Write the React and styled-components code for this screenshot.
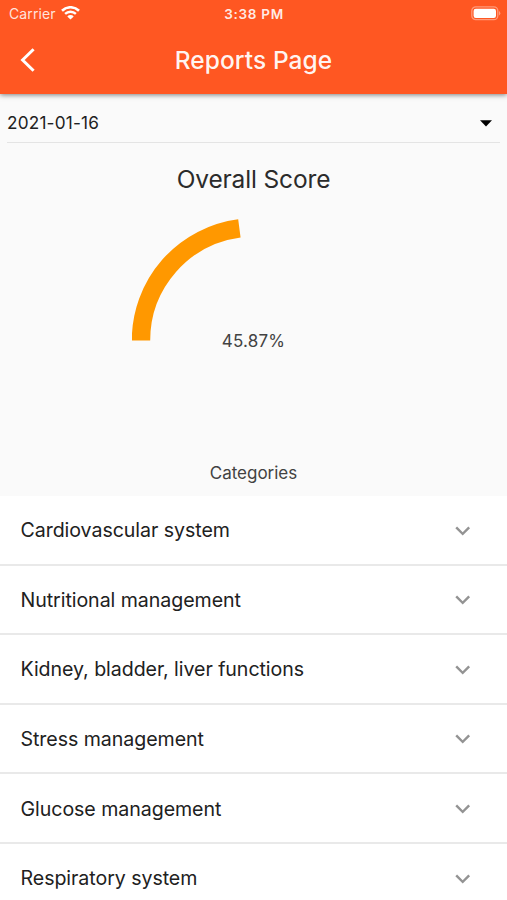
import React, { useState } from "react";
import styled, { createGlobalStyle } from "styled-components";

const categories = [
  "Cardiovascular system",
  "Nutritional management",
  "Kidney, bladder, liver functions",
  "Stress management",
  "Glucose management",
  "Respiratory system",
];

const RADIUS = 113;

// half circle gauge, starts on the left and runs clockwise
function arcPath(score) {
  const angle = (score / 100) * Math.PI;
  const x = 122 - RADIUS * Math.cos(angle);
  const y = 122.4 - RADIUS * Math.sin(angle);
  return `M ${122 - RADIUS} 122.4 A ${RADIUS} ${RADIUS} 0 0 1 ${x} ${y}`;
}

function StatusBar() {
  return (
    <StatusRow>
      <Carrier>
        <span>Carrier</span>
        <svg width="19" height="15" viewBox="0 0 19 15" fill="none">
          <path d="M1 4.7 A12.2 12.2 0 0 1 18 4.7" stroke="#fff" strokeWidth="2.6" />
          <path d="M4.1 7.9 A7.8 7.8 0 0 1 14.9 7.9" stroke="#fff" strokeWidth="2.4" />
          <path d="M9.5 13.6 L6.3 10.4 A4.5 4.5 0 0 1 12.7 10.4 Z" fill="#fff" />
        </svg>
      </Carrier>
      <Time>3:38 PM</Time>
      <Battery>
        <svg width="31" height="15" viewBox="0 0 31 15">
          <rect x="0.8" y="0.9" width="26" height="12.8" rx="4" fill="none" stroke="#fff" strokeOpacity="0.4" strokeWidth="1.3" />
          <rect x="2.6" y="2.7" width="22.4" height="9.2" rx="2.2" fill="#fff" />
          <path d="M28.2 5 A3 3 0 0 1 28.2 9.6 Z" fill="#fff" fillOpacity="0.5" />
        </svg>
      </Battery>
    </StatusRow>
  );
}

function CategoryItem({ name }) {
  return (
    <Category>
      <span>{name}</span>
      <svg width="29.4" height="29.4" viewBox="0 0 24 24" fill="#939393">
        <path d="M16.59 8.59 12 13.17 7.41 8.59 6 10l6 6 6-6z" />
      </svg>
    </Category>
  );
}

function App() {
  const [score] = useState(45.87);

  return (
    <Page>
      <GlobalStyle />
      <Header>
        <StatusBar />
        <Toolbar>
          <BackButton aria-label="Back">
            <svg width="16" height="24" viewBox="0 0 16 24" fill="none">
              <path d="M13.6 1.2 L2.6 12 L13.6 22.8" stroke="#fff" strokeWidth="3" />
            </svg>
          </BackButton>
          <Title>Reports Page</Title>
        </Toolbar>
      </Header>
      <DateSelect>
        <span>2021-01-16</span>
        <svg width="12" height="7" viewBox="0 0 12 7">
          <path d="M0 0.3 H12 L6 6.4 Z" fill="#000" />
        </svg>
      </DateSelect>
      <ScoreSection>
        <h2>Overall Score</h2>
        <Gauge>
          <svg width="244" height="244" viewBox="0 0 244 244">
            <path d={arcPath(score)} fill="none" stroke="#ff9800" strokeWidth="18.4" />
          </svg>
          <Score>{score}%</Score>
        </Gauge>
        <h3>Categories</h3>
      </ScoreSection>
      <CategoryList>
        {categories.map((name) => (
          <CategoryItem key={name} name={name} />
        ))}
      </CategoryList>
    </Page>
  );
}

const GlobalStyle = createGlobalStyle`
  * {
    box-sizing: border-box;
  }
  body {
    margin: 0;
    overflow: hidden;
    font-family: Inter, "Liberation Sans", sans-serif;
  }
  svg {
    display: block;
    flex-shrink: 0;
  }
`;
const Page = styled.div`
  width: 507px;
  height: 900px;
  overflow: hidden;
  display: flex;
  flex-direction: column;
  background-color: #fafafa;
`;
const Header = styled.header`
  height: 94px;
  flex-shrink: 0;
  background-color: #ff5722;
  color: #fff;
  box-shadow: 0 1px 5px rgba(0, 0, 0, 0.5);
`;
const StatusRow = styled.div`
  display: grid;
  grid-template-columns: 1fr auto 1fr;
  align-items: center;
  height: 26px;
  padding: 1px 5px 0 9px;
  font-size: 14px;
  line-height: 24px;
`;
const Carrier = styled.div`
  display: flex;
  align-items: center;
  gap: 5.5px;
  color: rgba(255, 255, 255, 0.85);
  letter-spacing: 0.1px;
`;
const Time = styled.div`
  margin-left: -3px;
  font-weight: 600;
  font-size: 13.5px;
  letter-spacing: 0.7px;
  color: rgba(255, 255, 255, 0.9);
`;
const Battery = styled.div`
  display: flex;
  justify-content: flex-end;
`;
const Toolbar = styled.div`
  display: grid;
  grid-template-columns: 60px 1fr 60px;
  align-items: center;
  height: 67px;
`;
const BackButton = styled.button`
  border: none;
  background: none;
  padding: 0 0 0 20px;
`;
const Title = styled.h1`
  margin: 0;
  text-align: center;
  font-size: 24.5px;
  font-weight: 500;
  line-height: 30px;
  letter-spacing: 0.08px;
  color: rgba(255, 255, 255, 0.95);
`;
const DateSelect = styled.div`
  display: flex;
  align-items: center;
  justify-content: space-between;
  flex-shrink: 0;
  height: 41px;
  margin: 8px 7px 0;
  padding: 2px 8px 0 0;
  border-bottom: 1px solid #e4e4e4;
  font-size: 17.2px;
  letter-spacing: 0.2px;
  color: #212121;

  span {
    padding-bottom: 2px;
  }
`;
const ScoreSection = styled.section`
  display: flex;
  flex-direction: column;
  align-items: center;
  height: 353px;
  flex-shrink: 0;

  h2 {
    margin: 20px 0 0;
    font-size: 24.5px;
    font-weight: 400;
    line-height: 32px;
    letter-spacing: -0.15px;
    color: #2b2b2b;
  }

  h3 {
    margin: 0;
    font-size: 17px;
    font-weight: 400;
    line-height: 22px;
    letter-spacing: -0.02px;
    color: #424242;
  }
`;
const Gauge = styled.div`
  display: grid;
  place-items: center;
  margin: 23px 0 0;

  > * {
    grid-area: 1 / 1;
  }
`;
const Score = styled.span`
  padding-top: 1px;
  font-size: 17px;
  line-height: 22px;
  letter-spacing: 0.2px;
  color: #424242;
`;
const CategoryList = styled.div`
  flex-shrink: 0;
  background-color: #fff;
`;
const Category = styled.div`
  display: flex;
  align-items: center;
  justify-content: space-between;
  height: 69.6px;
  padding: 1px 29.5px 0 20.5px;
  border-bottom: 2px solid #e9e9e9;
  font-size: 19.6px;
  letter-spacing: -0.06px;
  color: #212121;
`;

export default App;
